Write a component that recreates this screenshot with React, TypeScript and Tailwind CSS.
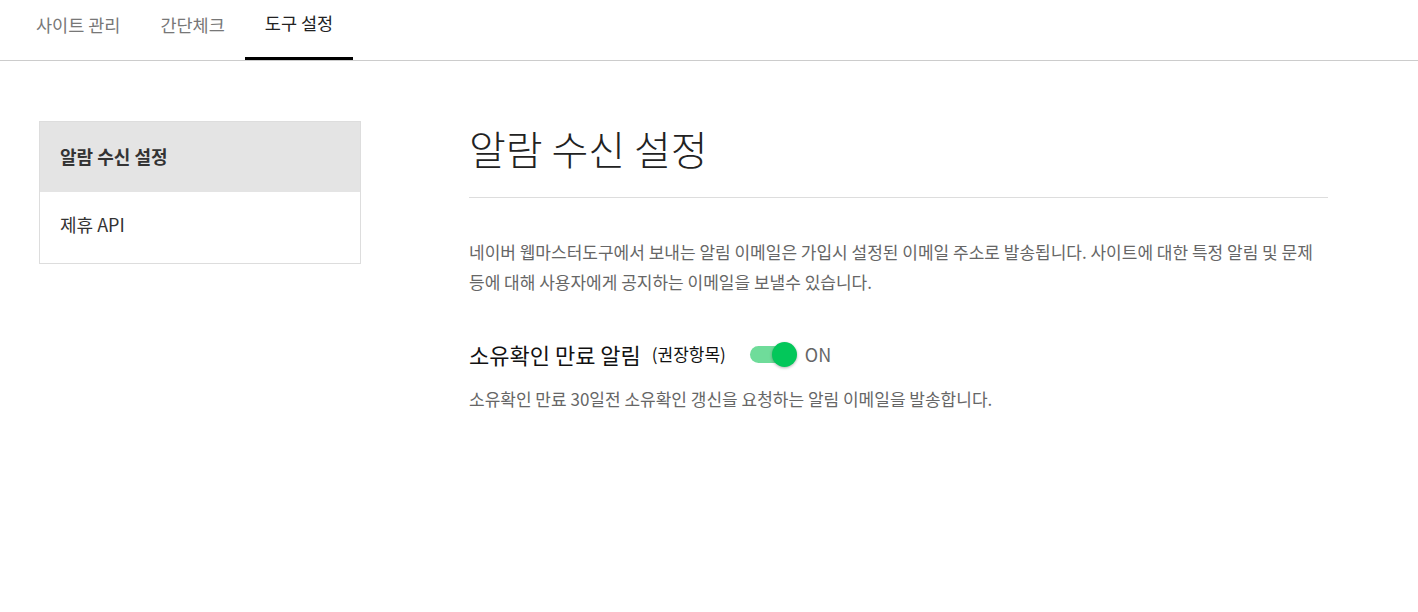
import React from "react";

const font = { fontFamily: '"Noto Sans CJK KR", "Noto Sans", sans-serif' };

export default function App() {
  return (
    <div className="w-[1418px] h-[612px] bg-white" style={font}>
      <div className="h-[61px] border-b border-[#cccccc] flex pl-4">
        <div className="px-5 h-full flex items-center text-[17.5px] text-[#777777] pb-[10px]">사이트 관리</div>
        <div className="px-5 h-full flex items-center text-[17.5px] text-[#777777] pb-[10px]">간단체크</div>
        <div className="px-5 h-full flex items-center text-[17.5px] text-[#222222] pb-[10px] border-b-[3px] border-black">도구 설정</div>
      </div>
      <div className="flex items-start pt-[60px] pl-[39px]">
        <div className="w-[322px] border border-[#dddddd]">
          <div className="h-[70px] bg-[#e4e4e4] flex items-center pl-5 pb-[2px] text-[18px] font-bold text-[#333333]">알람 수신 설정</div>
          <div className="h-[71px] flex items-center pl-5 pb-[6px] text-[18px] text-[#333333]">제휴 API</div>
        </div>
        <div className="ml-[108px] w-[859px]">
          <h1 className="text-[40px] leading-[54px] text-[#222222] font-light">알람 수신 설정</h1>
          <div className="mt-[22px] border-t border-[#dddddd]" />
          <p className="mt-[39px] text-[17px] leading-[30px] text-[#666666] pr-[10px]">
            네이버 웹마스터도구에서 보내는 알림 이메일은 가입시 설정된 이메일 주소로 발송됩니다. 사이트에 대한 특정 알림 및 문제 등에 대해 사용자에게 공지하는 이메일을 보낼수 있습니다.
          </p>
          <div className="mt-[42px] flex items-center h-[30px]">
            <span className="text-[22px] text-[#111111]">소유확인 만료 알림</span>
            <span className="ml-[11px] text-[17px] text-[#111111]">(권장항목)</span>
            <div className="ml-[24px] relative w-[35px] h-[17px]">
              <div className="absolute inset-0 rounded-full bg-[#6fdc9a]" />
              <div className="absolute right-[-12px] top-[-4px] w-[25px] h-[25px] rounded-full bg-[#03c75a] shadow-[0_1px_3px_rgba(0,0,0,0.3)]" />
            </div>
            <span className="ml-[20px] text-[18px] text-[#666666]">ON</span>
          </div>
          <p className="mt-[15px] text-[17px] leading-[30px] text-[#666666]">소유확인 만료 30일전 소유확인 갱신을 요청하는 알림 이메일을 발송합니다.</p>
        </div>
      </div>
    </div>
  );
}
